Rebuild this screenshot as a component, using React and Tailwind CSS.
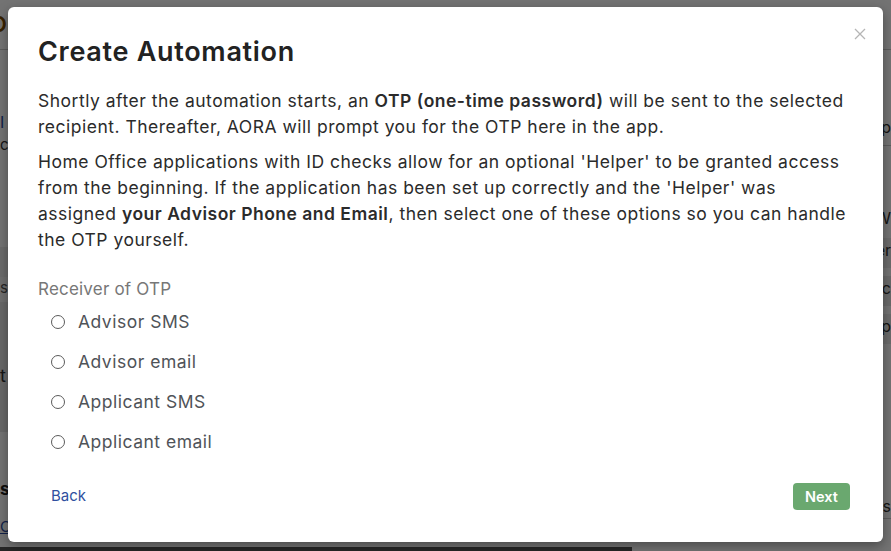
import React from "react";

const font = { fontFamily: "Inter, 'Noto Sans', sans-serif" };

function Radio({ label }) {
  return (
    <label className="flex h-[40px] items-center pl-[13px] text-[17.5px] tracking-[0.5px] text-[#4f5358]">
      <span className="mr-[13px] box-border h-[14px] w-[14px] rounded-full border-[1.5px] border-[#5b5b5b]" />
      {label}
    </label>
  );
}

export default function App() {
  return (
    <div className="relative h-[551px] w-[891px] overflow-hidden bg-white" style={font}>
      {/* page behind the dialog */}
      <div className="flex h-[50px] items-center border-b border-[#ccc] text-[22px] font-semibold text-[#7a4a00]">
        <span className="-ml-[10px]">Op</span>
      </div>
      <div className="flex">
        <div className="w-[632px]">
          <div className="mt-[60px] text-[16px] text-[#2a4aa0]">I</div>
          <div className="text-[15px] text-[#333]">c</div>
          <div className="mt-[90px] h-[30px] bg-[#eee] text-[15px] text-[#7a4a00]">&nbsp;&nbsp;c</div>
          <div className="h-[25px] bg-[#f6f6f6] text-[15px] text-[#555]">s</div>
          <div className="h-[130px] bg-[#e6e6e6] pt-[60px] text-[18px] text-[#333]">t</div>
          <div className="mt-[45px] text-[17px] font-bold text-[#222]">s</div>
          <div className="mt-[14px] text-[15px] text-[#2a4aa0] underline">C</div>
          <div className="mt-[8px] h-[20px] bg-[#555]" />
        </div>
        <div className="flex-1 text-[16px] text-[#333]">
          <div className="mt-[65px] border-b border-[#ccc] pb-[6px] text-right">op</div>
          <div className="mt-[60px] text-right">W</div>
          <div className="mt-[8px] h-[30px] bg-[#eee] text-right">er</div>
          <div className="mt-[8px] h-[30px] bg-[#e8e8e8] text-right">c</div>
          <div className="mt-[8px] h-[30px] bg-[#eee] text-right">ep</div>
          <div className="mt-[150px] border-b border-[#ccc] text-right">s</div>
        </div>
      </div>

      {/* dimmed backdrop */}
      <div className="absolute inset-0 bg-black/55" />

      {/* dialog */}
      <div className="absolute left-[8px] top-[7px] flex h-[535px] w-[875px] flex-col rounded-[6px] bg-white px-[30px] pt-[29px] shadow-[0_4px_12px_rgba(0,0,0,0.35)]">
        <button className="absolute right-[17px] top-[21px] text-[#b5b5b5]" aria-label="Close">
          <svg width="12" height="12" viewBox="0 0 12 12" fill="none" stroke="currentColor" strokeWidth="1.3">
            <path d="M1 1l10 10M11 1L1 11" />
          </svg>
        </button>
        <h2 className="text-[27px] font-semibold leading-[32px] tracking-[0.7px] text-[#222]">Create Automation</h2>
        <p className="mt-[20px] text-[17.5px] leading-[26px] tracking-[0.5px] text-[#2b2b2b]">
          Shortly after the automation starts, an <b className="font-semibold">OTP (one-time password)</b> will be sent to the selected
          <br />
          recipient. Thereafter, AORA will prompt you for the OTP here in the app.
        </p>
        <p className="mt-[9px] text-[17.5px] leading-[26px] tracking-[0.5px] text-[#2b2b2b]">
          Home Office applications with ID checks allow for an optional 'Helper' to be granted access
          <br />
          from the beginning. If the application has been set up correctly and the 'Helper' was
          <br />
          assigned <b className="font-semibold">your Advisor Phone and Email</b>, then select one of these options so you can handle
          <br />
          the OTP yourself.
        </p>
        <div className="mt-[23px] text-[17px] leading-[26px] tracking-[0.2px] text-[#777]">Receiver of OTP</div>
        <div className="flex flex-col">
          <Radio label="Advisor SMS" />
          <Radio label="Advisor email" />
          <Radio label="Applicant SMS" />
          <Radio label="Applicant email" />
        </div>
        <div className="mt-[21px] flex items-center justify-between pl-[13px] pr-[3px]">
          <a className="text-[15px] text-[#3050a0]">Back</a>
          <button className="h-[27px] w-[57px] rounded-[4px] bg-[#6aa86f] text-[14.5px] font-semibold text-white">Next</button>
        </div>
      </div>
    </div>
  );
}
